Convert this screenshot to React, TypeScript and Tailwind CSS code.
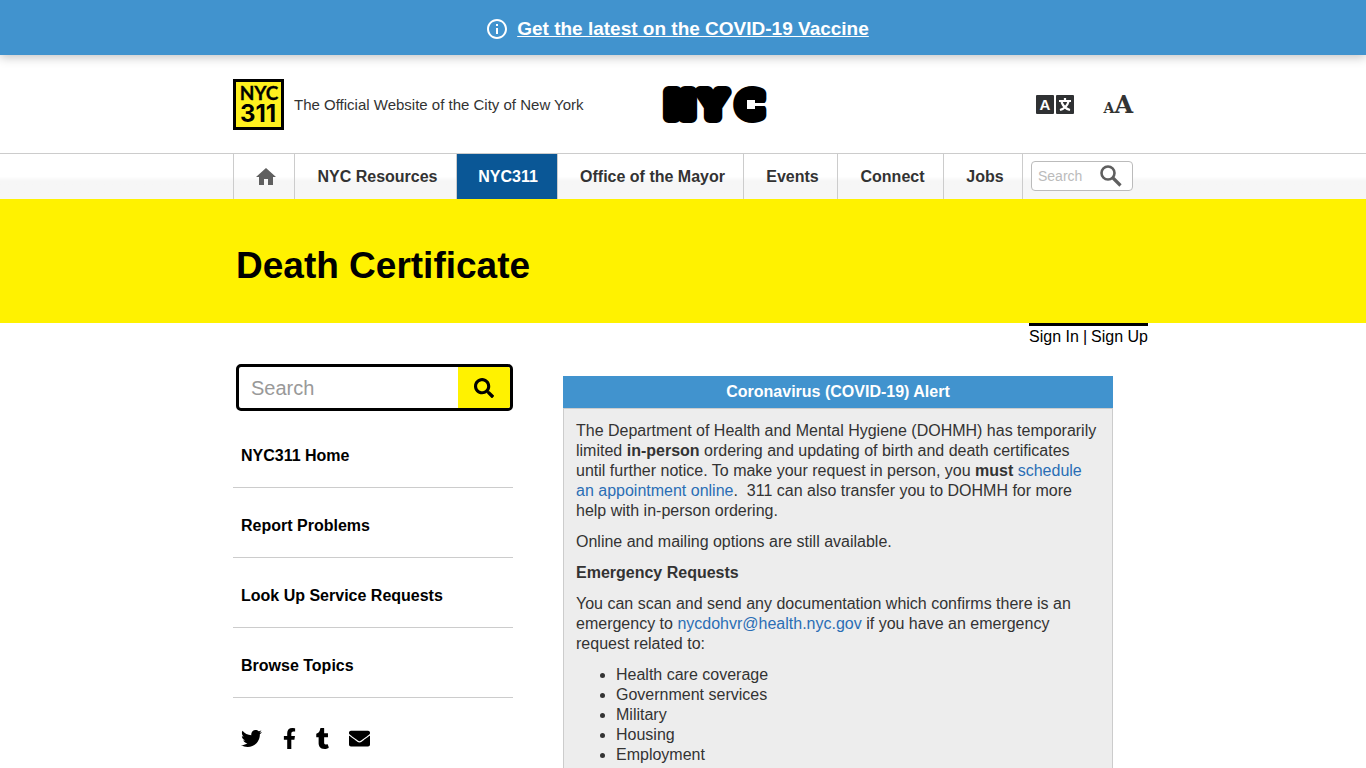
import { FaEnvelope, FaFacebookF, FaSearch, FaTumblr, FaTwitter } from "react-icons/fa";
import { MdHome, MdInfoOutline } from "react-icons/md";

const navItems = [
  { label: "NYC Resources", className: "w-[162px] pl-1" },
  { label: "NYC311", className: "w-[101px] bg-[#0a5796] pl-0.5 text-white" },
  { label: "Office of the Mayor", className: "w-[186px] pl-1" },
  { label: "Events", className: "w-[94px] pl-1" },
  { label: "Connect", className: "w-[106px] pl-1" },
  { label: "Jobs", className: "w-[79px] pl-1" },
];

const sideLinks = ["NYC311 Home", "Report Problems", "Look Up Service Requests", "Browse Topics"];

const socials = [
  { label: "Twitter", href: "#twitter", icon: <FaTwitter size={21} />, className: "w-[38px]" },
  { label: "Facebook", href: "#facebook", icon: <FaFacebookF size={21} />, className: "w-[33px]" },
  { label: "Tumblr", href: "#tumblr", icon: <FaTumblr size={21} />, className: "w-[37px]" },
  { label: "Email", href: "#email", icon: <FaEnvelope size={21} />, className: "w-8" },
];

const topics = ["Health care coverage", "Government services", "Military", "Housing", "Employment"];

function Logo311() {
  return (
    <a href="#311" aria-label="NYC 311">
      <svg width="51" height="51" viewBox="0 0 51 51">
        <rect x="1.5" y="1.5" width="48" height="48" fill="#fff01f" stroke="#000" strokeWidth="3" />
        <g textAnchor="middle" fill="#000" stroke="#000">
          <text x="26" y="21" fontFamily="Lato, sans-serif" fontWeight="700" fontSize="19" strokeWidth="0.3">NYC</text>
          <text x="25" y="43" fontFamily="Inter, sans-serif" fontWeight="700" fontSize="24" strokeWidth="0">311</text>
        </g>
      </svg>
    </a>
  );
}

function LogoNyc() {
  return (
    <a href="#nyc" aria-label="NYC">
      <svg width="106" height="60" viewBox="0 -12 106 60">
        <g
          fontFamily="DejaVu Sans, sans-serif"
          fontWeight="700"
          fontSize="34"
          textAnchor="middle"
          stroke="#000"
          strokeWidth="12"
          strokeLinejoin="round"
        >
          <text x="18" y="31">N</text>
          <text x="51" y="31">Y</text>
          <text x="88" y="31">C</text>
        </g>
        <path d="M85 14h8v3h13v3H93v3h-8z" fill="#fff" />
      </svg>
    </a>
  );
}

function TranslateIcon() {
  return (
    <svg width="38" height="19" viewBox="0 0 38 19">
      <rect width="18" height="19" rx="1" fill="#2f3133" />
      <rect x="20" width="18" height="19" rx="1" fill="#2f3133" />
      <text x="9" y="15" textAnchor="middle" fontSize="15" fontWeight="700" fontFamily="Liberation Sans, sans-serif" fill="#fff">
        A
      </text>
      <path d="M23 6h12M29 3v3M32.500 6.500c-1 4-4 7-8.500 8.500M25.500 7c1.500 4 4.500 7 8.500 8" fill="none" stroke="#fff" strokeWidth="2.200" />
    </svg>
  );
}

function NavSearchIcon() {
  return (
    <svg width="22" height="22" viewBox="0 0 22 22" fill="none" stroke="#5f5f5f">
      <circle cx="8" cy="8" r="6.5" strokeWidth="2.600" />
      <path d="M12.500 12.500l8 8" strokeWidth="3.200" />
    </svg>
  );
}

export default function App() {
  return (
    <div className="h-screen overflow-hidden bg-white font-['Liberation_Sans',Arial,sans-serif] text-base leading-5 text-[#333]">
      <div className="flex h-[55px] items-center justify-center gap-2 bg-[#4193ce] pt-0.5 pr-3 text-white shadow-[0_2px_10px_rgba(0,0,0,0.25)]">
        <MdInfoOutline size={24} />
        <a href="#vaccine" className="text-[19px] font-bold underline">Get the latest on the COVID-19 Vaccine</a>
      </div>

      <header>
        <div className="mx-auto flex h-[98px] max-w-[900px] items-center justify-between">
          <div className="flex flex-1 items-center gap-2.5">
            <Logo311 />
            <span className="pt-0.5 text-[15px]">The Official Website of the City of New York</span>
          </div>
          <div className="pl-16"><LogoNyc /></div>
          <div className="flex flex-1 items-center justify-end gap-[30px]">
            <button type="button" aria-label="Translate"><TranslateIcon /></button>
            <button type="button" aria-label="Text size" className="flex items-baseline pt-1 font-['DejaVu_Serif',serif] font-bold">
              <span className="text-[14px] leading-5">A</span>
              <span className="text-[24px] leading-5">A</span>
            </button>
          </div>
        </div>
        <div className="border-t border-[#ccc] bg-linear-to-b from-white from-50% to-[#f6f6f6] to-60%">
          <nav className="mx-auto flex h-[45px] max-w-[900px] font-bold">
            <a href="#home" aria-label="Home" className="flex w-[61px] items-center justify-center border-l border-[#ccc] pl-1 text-[#5f5f5f]">
              <MdHome size={24} />
            </a>
            {navItems.map((item) => (
              <a
                key={item.label}
                href="#nav"
                className={`flex items-center justify-center border-l border-[#ccc] whitespace-nowrap ${item.className}`}
              >
                {item.label}
              </a>
            ))}
            <form className="flex flex-1 items-center border-l border-[#ccc] pb-0.5 pl-2 font-normal">
              <div className="flex h-[30px] w-full items-center rounded border border-[#bbb] bg-white">
                <input aria-label="Search the site" placeholder="Search" className="w-full min-w-0 pl-1.5 text-[14px] outline-none placeholder:text-[#bbb]" />
                <button type="button" aria-label="Search the site" className="shrink-0 pr-2.5"><NavSearchIcon /></button>
              </div>
            </form>
          </nav>
        </div>
      </header>

      <div className="bg-[#fff200]">
        <h1 className="mx-auto flex h-[124px] max-w-[894px] items-center pt-2.5 text-[37px] font-bold text-black">Death Certificate</h1>
      </div>

      <div className="mx-auto max-w-[930px]">
        <div className="flex justify-end text-black">
          <div className="flex gap-1 border-t-3 border-black pt-px">
            <a href="#signin">Sign In</a>
            <span>|</span>
            <a href="#signup">Sign Up</a>
          </div>
        </div>
        <div className="flex items-start gap-[50px] px-[15px] pt-[17px]">
          <aside className="w-[280px] text-black">
            <form className="ml-[3px] flex h-[47px] overflow-hidden rounded-[5px] border-3 border-black">
              <input aria-label="Search 311" placeholder="Search" className="min-w-0 flex-1 pl-3 text-xl outline-none placeholder:text-[#999]" />
              <button type="button" aria-label="Search 311" className="flex w-[52px] items-center justify-center bg-[#fff200]"><FaSearch size={20} /></button>
            </form>
            <ul className="pt-[7px]">
              {sideLinks.map((label) => (
                <li key={label} className="flex h-[70px] items-center border-b border-[#ccc] pt-1.5 pl-2 font-bold">
                  <a href="#side">{label}</a>
                </li>
              ))}
            </ul>
            <div className="flex pt-[30px] pl-2">
              {socials.map((s) => (
                <a key={s.label} href={s.href} aria-label={s.label} className={s.className}>{s.icon}</a>
              ))}
            </div>
          </aside>

          <section className="mt-3 w-[550px]">
            <h2 className="h-8 bg-[#4193ce] text-center leading-8 font-bold text-white">Coronavirus (COVID-19) Alert</h2>
            <div className="flex flex-col gap-[11px] border border-[#ccc] bg-[#ededed] px-3 pt-3 pb-6">
              <p>
                The Department of Health and Mental Hygiene (DOHMH) has temporarily limited <b>in-person</b> ordering and
                updating of birth and death certificates until further notice. To make your request in person, you <b>must</b>{" "}
                <a href="#schedule" className="text-[#2a6db5]">schedule an appointment online</a>.&nbsp; 311 can also
                transfer you to DOHMH for more help with in-person ordering.
              </p>
              <p>Online and mailing options are still available.</p>
              <p><b>Emergency Requests</b></p>
              <p>
                You can scan and send any documentation which confirms there is an emergency to{" "}
                <a href="mailto:nycdohvr@health.nyc.gov" className="text-[#2a6db5]">nycdohvr@health.nyc.gov</a> if you
                have an emergency request related to:
              </p>
              <ul className="list-disc pl-10">
                {topics.map((topic) => <li key={topic}>{topic}</li>)}
              </ul>
            </div>
          </section>
        </div>
      </div>
    </div>
  );
}
